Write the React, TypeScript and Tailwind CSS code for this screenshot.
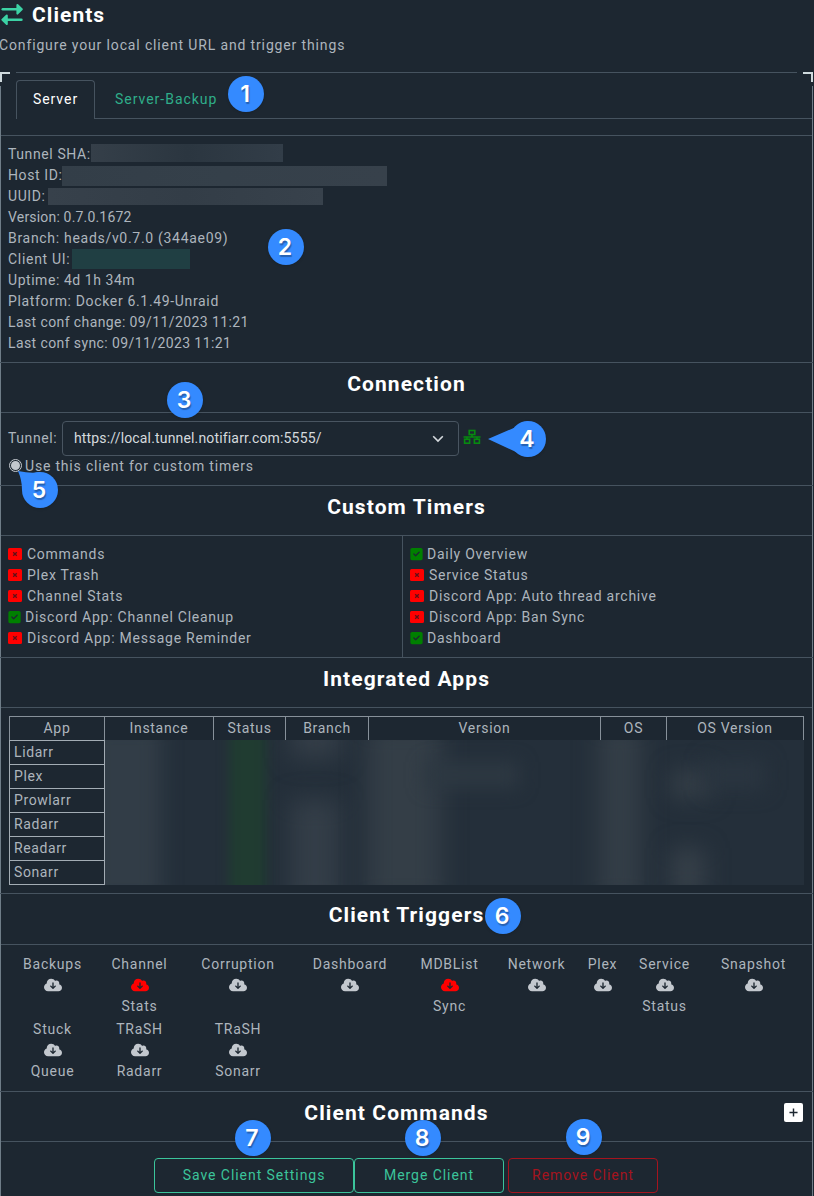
import React from 'react';
import { FaCloudArrowDown, FaSquareCheck } from 'react-icons/fa6';

const line = 'border-[#46535f]';

function SwapIcon() {
  return (
    <svg viewBox="0 0 22 22" className="-mt-[2px] h-[22px] w-[22px]" fill="none" stroke="#3cd2a5" strokeWidth="2.6" strokeLinecap="round">
      <path d="M1.8 6.3H17" />
      <path d="M5 16.7H20.4" />
      <path d="M16.4 2L20.8 6.3L16.4 10.6Z" fill="#3cd2a5" strokeWidth="2" strokeLinejoin="round" />
      <path d="M5.8 12.4L1.4 16.7L5.8 21Z" fill="#3cd2a5" strokeWidth="2" strokeLinejoin="round" />
    </svg>
  );
}

function NetworkIcon() {
  return (
    <svg viewBox="0 0 18 16" className="-mt-[3px] h-4 w-[18px]" fill="none" stroke="#078a10" strokeWidth="1.6">
      <rect x="6.2" y="1.5" width="5.6" height="4" />
      <path d="M9 5.5V8M0.5 8H17.5M4 8V10M14 8V10" />
      <rect x="1.6" y="10.2" width="5" height="4" />
      <rect x="11.4" y="10.2" width="5" height="4" />
    </svg>
  );
}

function Badge({ n, className, tail }: { n: number; className: string; tail?: string }) {
  return (
    <div className={`absolute flex h-9 w-9 items-center justify-center rounded-full bg-[#348aff] shadow-[0_1px_3px_rgba(0,0,0,0.15)] ${className}`}>
      {tail && (
        <svg viewBox="0 0 60 60" className="absolute -left-3 -top-3 h-[60px] w-[60px] overflow-visible" fill="#348aff">
          <path d={tail} />
        </svg>
      )}
      <span className="relative pr-[2px] font-['Inter','Liberation_Sans',sans-serif] text-[23px] font-semibold leading-none tracking-normal text-white [text-shadow:1px_2px_1px_rgba(0,0,0,0.3)]">{n}</span>
    </div>
  );
}

function Heading({ children, className = 'h-[50px]' }: { children: React.ReactNode; className?: string }) {
  return (
    <div className={`relative border-t ${line} ${className}`}>
      <h2 className="pt-[7px] text-center text-[21px] font-bold leading-7 tracking-[1.1px] text-white">{children}</h2>
    </div>
  );
}

function Timer({ on, name }: { on?: boolean; name: string }) {
  return (
    <li className="flex h-[21px] items-center">
      {on ? (
        <FaSquareCheck className="-mt-[2px] mr-[4px] h-[14px] w-[13px] text-[#008000]" />
      ) : (
        <svg viewBox="0 0 14 12" className="-mt-[2px] mr-[5px] h-3 w-[14px]">
          <rect width="14" height="12" rx="1.5" fill="#ff0000" />
          <path d="M5.2 4.2L8.8 7.8M8.8 4.2L5.2 7.8" stroke="#5f1018" strokeWidth="1.3" />
        </svg>
      )}
      <span>{name}</span>
    </li>
  );
}

function Trigger({ a, b, red }: { a: string; b?: string; red?: boolean }) {
  return (
    <div className="flex flex-col items-center">
      <span className="h-[21px]">{a}</span>
      <span className="flex h-[21px] items-center pb-[2px]">
        <FaCloudArrowDown className={`h-4 w-[18px] ${red ? 'text-[#ff0000]' : 'text-[#c3c8ce]'}`} />
      </span>
      <span className="h-[21px]">{b}</span>
    </div>
  );
}

const left = [['Commands'], ['Plex Trash'], ['Channel Stats'], ['Discord App: Channel Cleanup', 'on'], ['Discord App: Message Reminder']];
const right = [['Daily Overview', 'on'], ['Service Status'], ['Discord App: Auto thread archive'], ['Discord App: Ban Sync'], ['Dashboard', 'on']];
const apps = ['Lidarr', 'Plex', 'Prowlarr', 'Radarr', 'Readarr', 'Sonarr'];

export default function App() {
  return (
    <div className="relative h-[1196px] w-[814px] overflow-hidden whitespace-nowrap bg-[#1d2731] font-['Roboto','Liberation_Sans',sans-serif] text-[14px] leading-[21px] tracking-[0.6px] text-[#adb5bd]">
      <header className="h-[72px]">
        <h1 className="flex h-[30px] items-center gap-[9px] pl-px text-[21px] font-bold tracking-[1.05px] text-white">
          <SwapIcon />
          Clients
        </h1>
        <p className="-ml-px pt-[5px] tracking-[0.86px]">Configure your local client URL and trigger things</p>
      </header>

      <main className="relative h-[1124px] w-[813px]">
        <div className="absolute left-0 top-0 h-[10px] w-[10px] border-l-2 border-t-2 border-[#cfdade]" />
        <div className="absolute right-0 top-0 h-[10px] w-[10px] border-r-2 border-t-2 border-[#cfdade]" />
        <div className="absolute bottom-0 left-0 top-[14px] w-px bg-[#6f7d88]" />
        <div className="absolute bottom-0 right-0 top-[14px] w-px bg-[#6f7d88]" />

        <div className={`mx-4 h-[8px] border-t ${line}`} />
        <div className={`ml-4 flex h-[39px] border-b ${line}`}>
          <div className={`flex h-[39px] w-[79px] items-center justify-center rounded-t border border-b-0 ${line} bg-[#1d2731] pb-px tracking-[0.95px] text-white`}>Server</div>
          <div className="flex items-center pl-[20px] tracking-[0.98px] text-[#2fae8a]">Server-Backup</div>
        </div>
        <div className="h-4" />

        <section className={`h-[227px] border-t ${line} pl-[8px] pt-[8px]`}>
          <div className="flex h-[21px]">
            Tunnel SHA:
            <span className="ml-auto mr-[530px] h-[18px] w-[193px] bg-linear-to-r from-[#353f49] via-[#2b3640] to-[#323d48]" />
          </div>
          <div className="flex h-[21px]">
            Host ID:
            <span className="ml-auto mr-[426px] mt-px h-[20px] w-[325px] bg-linear-to-r from-[#333e48] via-[#35404a] to-[#37414b]" />
          </div>
          <div className="flex h-[21px]">
            UUID:
            <span className="ml-auto mr-[490px] mt-[2px] h-[17px] w-[275px] bg-linear-to-r from-[#37414b] via-[#333d47] to-[#38424c]" />
          </div>
          <div className="tracking-[0.18px]">Version: 0.7.0.1672</div>
          <div className="tracking-[0.7px]">Branch: heads/v0.7.0 (344ae09)</div>
          <div className="flex h-[21px] tracking-[0.7px]">
            Client UI:
            <span className="ml-auto mr-[623px] h-[20px] w-[118px] bg-[#203f43]" />
          </div>
          <div className="tracking-[0.55px]">Uptime: 4d 1h 34m</div>
          <div className="tracking-[0.66px]">Platform: Docker 6.1.49-Unraid</div>
          <div className="tracking-[0.4px]">Last conf change: 09/11/2023 11:21</div>
          <div className="tracking-[0.4px]">Last conf sync: 09/11/2023 11:21</div>
        </section>

        <Heading>Connection</Heading>
        <section className={`h-[73px] border-t ${line} pl-2 pt-2`}>
          <div className="flex h-[35px] items-center">
            <span className="w-[54px]">Tunnel:</span>
            <div className="flex h-[35px] w-[397px] items-center justify-between rounded border border-[#495561] pl-[11px] pr-[13px] tracking-[0.16px] text-[#d5dade]">
              https://local.tunnel.notifiarr.com:5555/
              <svg viewBox="0 0 14 14" className="h-[14px] w-[14px]" fill="none" stroke="#d5dade" strokeWidth="1.6">
                <path d="M2.2 4.2L7 9L11.8 4.2" />
              </svg>
            </div>
            <span className="ml-[4px]"><NetworkIcon /></span>
          </div>
          <div className="flex h-[21px] items-center tracking-[0.81px]">
            <span className="-mt-[3px] ml-px mr-[3px] flex h-[13px] w-[13px] items-center justify-center rounded-full border border-[#c3c8ce]">
              <span className="h-[9px] w-[9px] rounded-full bg-[#c3c8ce]" />
            </span>
            Use this client for custom timers
          </div>
        </section>

        <Heading>Custom Timers</Heading>
        <section className={`flex h-[122px] border-t ${line} tracking-[0.75px]`}>
          <ul className={`w-[403px] border-r ${line} pl-2 pt-2`}>
            {left.map(([n, on]) => <Timer key={n} name={n} on={!!on} />)}
          </ul>
          <ul className="pl-[7px] pt-2">
            {right.map(([n, on]) => <Timer key={n} name={n} on={!!on} />)}
          </ul>
        </section>

        <Heading>Integrated Apps</Heading>
        <section className={`h-[186px] border-t ${line} pl-[9px] pt-2`}>
          <div className="grid h-[24px] w-[795px] grid-cols-[96px_109px_72px_83px_232px_66px_137px] border-t border-[#87919a] text-center leading-[23px] tracking-[0.68px]">
            <div className="border-x border-[#87919a]">App</div>
            <div className="border-r border-[#87919a]">Instance</div>
            <div className="border-r border-[#87919a]">Status</div>
            <div className="border-r border-[#87919a]">Branch</div>
            <div className="border-r border-[#87919a]">Version</div>
            <div className="border-r border-[#87919a]">OS</div>
            <div className="border-r border-[#87919a]">OS Version</div>
          </div>
          <div className="flex">
            <div className="w-[96px] border-b border-[#a3acb4]">
              {apps.map((a) => (
                <div key={a} className="h-[24px] border-x border-t border-[#a3acb4] pl-1 leading-[23px]">{a}</div>
              ))}
            </div>
            <div className="relative h-[145px] w-[699px] overflow-hidden bg-[#242f3a]">
              <div className="absolute -left-4 -top-4 h-[180px] w-[72px] bg-[#323d47] blur-[10px]" />
              <div className="absolute -top-4 left-[124px] h-[180px] w-[37px] bg-[#203c31] blur-[6px]" />
              <div className="absolute -top-8 left-[186px] h-[50px] w-[50px] bg-[#343e48] blur-[12px]" />
              <div className="absolute left-[186px] top-[60px] h-[110px] w-[48px] bg-[#343e48] blur-[12px]" />
              <div className="absolute -top-4 left-[262px] h-[180px] w-[74px] bg-[#343e47] blur-[12px]" />
              <div className="absolute left-[320px] top-[22px] h-[26px] w-[94px] bg-[#2d3842] blur-[9px]" />
              <div className="absolute -top-4 left-[494px] h-[180px] w-[42px] bg-[#343e47] blur-[12px]" />
              <div className="absolute left-[566px] top-[30px] h-[28px] w-[40px] bg-[#343e47] blur-[11px]" />
              <div className="absolute left-[600px] top-[20px] h-[30px] w-[60px] bg-[#2a3540] blur-[10px]" />
              <div className="absolute left-[566px] top-[108px] h-[50px] w-[34px] bg-[#353f48] blur-[11px]" />
            </div>
          </div>
        </section>

        <Heading className="h-[51px]">Client Triggers</Heading>
        <section className={`h-[147px] border-t ${line} pl-[9px] pt-[9px] tracking-[0.75px]`}>
          <div className="grid grid-cols-[87px_87px_110px_114px_85px_89px_43px_81px_97px] gap-y-[2px]">
            <Trigger a="Backups" />
            <Trigger a="Channel" b="Stats" red />
            <Trigger a="Corruption" />
            <Trigger a="Dashboard" />
            <Trigger a="MDBList" b="Sync" red />
            <Trigger a="Network" />
            <Trigger a="Plex" />
            <Trigger a="Service" b="Status" />
            <Trigger a="Snapshot" />
            <Trigger a="Stuck" b="Queue" />
            <Trigger a="TRaSH" b="Radarr" />
            <Trigger a="TRaSH" b="Sonarr" />
          </div>
        </section>

        <Heading>
          <span className="pr-5">Client Commands</span>
          <span className="absolute right-[10px] top-[11px] flex h-[19px] w-[19px] items-center justify-center rounded-[2px] bg-white">
            <svg viewBox="0 0 10 10" className="h-[9px] w-[9px]" stroke="#1d2731" strokeWidth="1.6"><path d="M5 0.5V9.5M0.5 5H9.5" /></svg>
          </span>
        </Heading>
        <footer className={`flex h-[55px] border-t ${line} pl-[154px] pt-4 tracking-[0.95px]`}>
          <button className="h-[35px] w-[200px] rounded border border-[#3bc49b] text-[#3bc49b]">Save Client Settings</button>
          <button className="h-[35px] w-[150px] rounded border border-[#3bc49b] text-[#3bc49b]">Merge Client</button>
          <button className="ml-1 h-[35px] w-[150px] rounded border border-[#a5141e] text-[#a5141e]">Remove Client</button>
        </footer>
      </main>

      <Badge n={1} className="left-[228px] top-[76px]" />
      <Badge n={2} className="left-[268px] top-[229px]" />
      <Badge n={3} className="left-[167px] top-[382px]" />
      <Badge n={4} className="left-[510px] top-[421px]" tail="M-10 30L18 18Q26 13 30 12V48Q26 47 18 43Z" />
      <Badge n={5} className="left-[22px] top-[472px]" tail="M8 11Q22 14 30 12L30 30L12 30Q12 20 8 11Z" />
      <Badge n={6} className="left-[485px] top-[898px]" />
      <Badge n={7} className="left-[235px] top-[1120px]" />
      <Badge n={8} className="left-[405px] top-[1120px]" />
      <Badge n={9} className="left-[566px] top-[1119px]" />
    </div>
  );
}
